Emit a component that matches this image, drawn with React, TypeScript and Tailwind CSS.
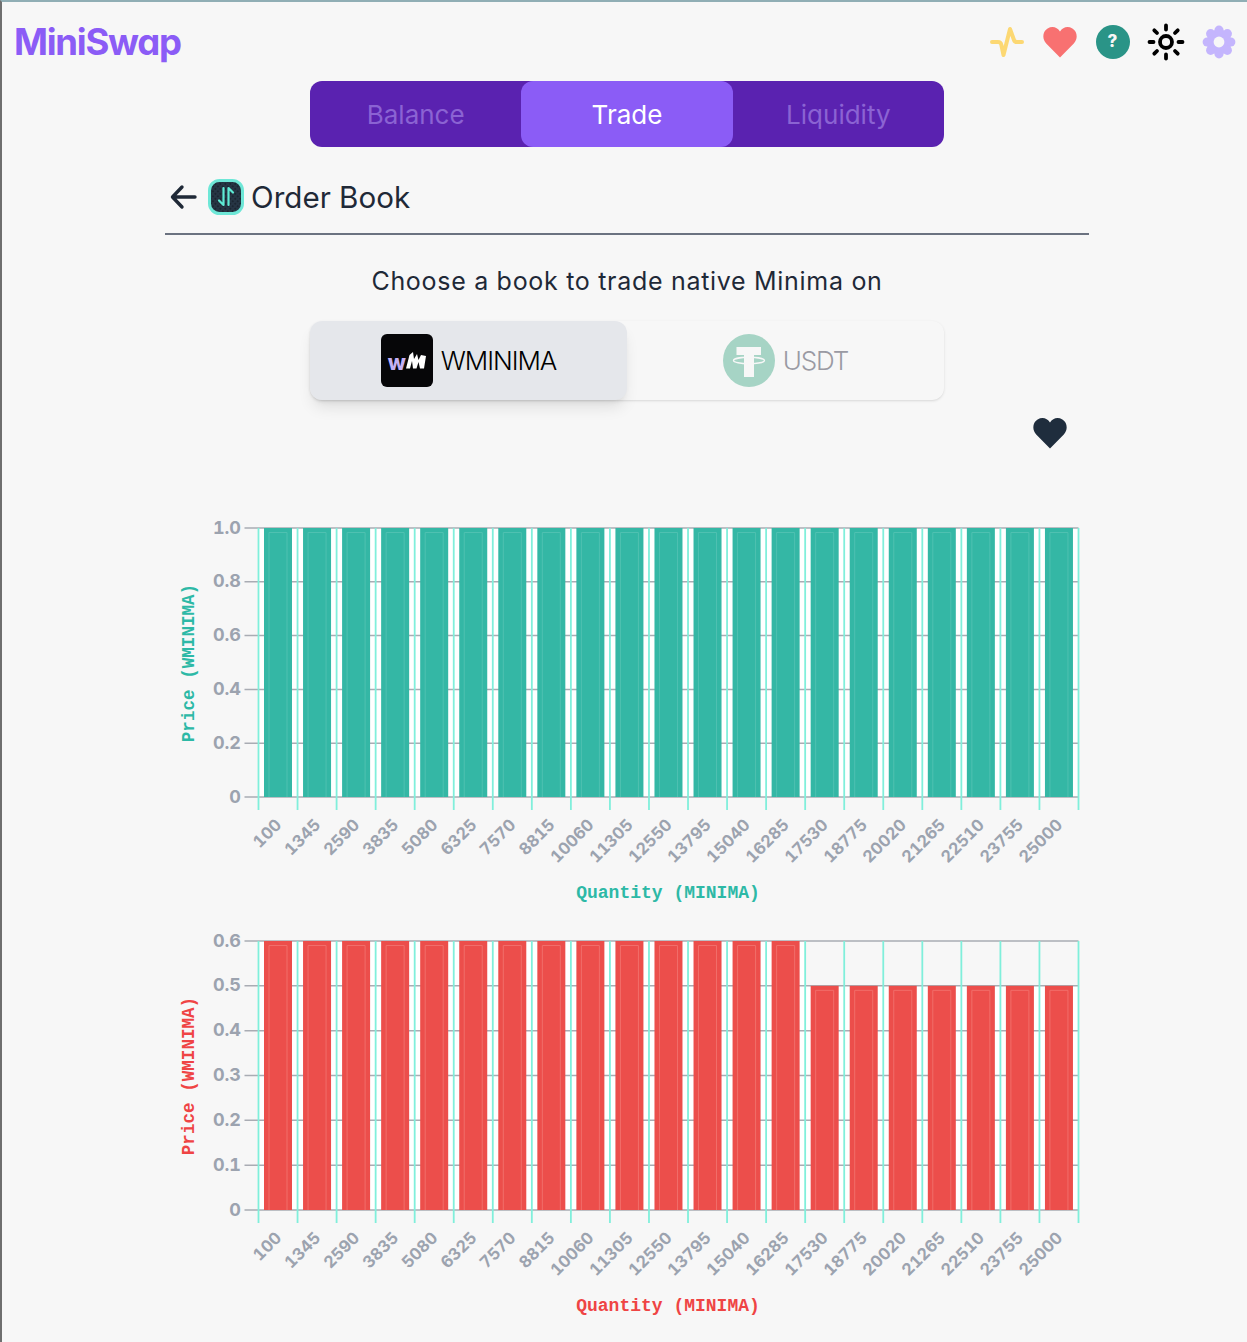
const QUANTITIES = [
  100, 1345, 2590, 3835, 5080, 6325, 7570, 8815, 10060, 11305, 12550, 13795, 15040, 16285, 17530,
  18775, 20020, 21265, 22510, 23755, 25000,
];

const PLOT_LEFT = 93.5;
const PLOT_RIGHT = 913.5;
const PLOT_TOP = 23;
const PLOT_BOTTOM = 292;
const STEP = (PLOT_RIGHT - PLOT_LEFT) / QUANTITIES.length;

type ChartProps = {
  ticks: string[];
  max: number;
  values: number[];
  barColor: string;
  innerColor: string;
  titleFill: string;
};

function BookChart({ ticks, max, values, barColor, innerColor, titleFill }: ChartProps) {
  const plotH = PLOT_BOTTOM - PLOT_TOP;
  return (
    <svg width="924" height="413" viewBox="0 0 924 413" className="block">
      {values.map((v, i) => {
        const x = PLOT_LEFT + i * STEP;
        const y = PLOT_BOTTOM - (v / max) * plotH;
        return <rect key={i} x={x} y={y} width={STEP} height={PLOT_BOTTOM - y} fill="#ffffff" />;
      })}
      {ticks.map((t, i) => {
        const y = PLOT_BOTTOM - (i / (ticks.length - 1)) * plotH;
        return (
          <g key={t}>
            <line x1={PLOT_LEFT - 14} x2={PLOT_RIGHT} y1={y} y2={y} stroke="#a9acb3" strokeWidth="1.5" />
            <text
              x={PLOT_LEFT - 17.5}
              y={y + 5.5}
              textAnchor="end"
              fontSize="18"
              fontWeight="700"
              fill="#9ca3af"
              fontFamily="Inter, sans-serif"
              className="tabular-nums"
            >
              {t}
            </text>
          </g>
        );
      })}
      {QUANTITIES.concat(0).map((_, i) => {
        const x = PLOT_LEFT + i * STEP;
        return <line key={i} x1={x} x2={x} y1={PLOT_TOP} y2={PLOT_BOTTOM + 13} stroke="#80efdb" strokeWidth="1.8" />;
      })}
      {values.map((v, i) => {
        const x = PLOT_LEFT + i * STEP + 5.5;
        const y = PLOT_BOTTOM - (v / max) * plotH;
        return (
          <g key={i}>
            <rect x={x} y={y} width={28} height={PLOT_BOTTOM - y} fill={barColor} />
            <path d={`M${x + 5} ${PLOT_BOTTOM} V${y + 4.5} H${x + 23} V${PLOT_BOTTOM}`} fill="none" stroke={innerColor} strokeWidth="1" />
          </g>
        );
      })}
      {QUANTITIES.map((q, i) => {
        const x = PLOT_LEFT + i * STEP + 24;
        return (
          <text
            key={q}
            transform={`translate(${x} 321) rotate(-45)`}
            textAnchor="end"
            fontSize="16.5"
            fontWeight="700"
            fill="#9ca3af"
            fontFamily="Inter, sans-serif"
            className="tabular-nums"
          >
            {q}
          </text>
        );
      })}
      <text
        x={503}
        y={393}
        textAnchor="middle"
        fontSize="18"
        fontWeight="700"
        fill={titleFill}
        fontFamily="'Liberation Mono', monospace"
      >
        Quantity (MINIMA)
      </text>
      <text
        transform="translate(29 158) rotate(-90)"
        textAnchor="middle"
        fontSize="17.6"
        fontWeight="700"
        fill={titleFill}
        fontFamily="'Liberation Mono', monospace"
      >
        Price (WMINIMA)
      </text>
    </svg>
  );
}

function HeartIcon({ color }: { color: string }) {
  return (
    <svg width="34" height="32" viewBox="0 0 34 32">
      <path
        d="M17 31.5 L3.2 17.5 C-1.2 12.6 -0.4 5.4 4.6 2.4 C9.4 -0.4 14.2 1.2 17 5.4 C19.8 1.2 24.6 -0.4 29.4 2.4 C34.4 5.4 35.2 12.6 30.8 17.5 Z"
        fill={color}
      />
    </svg>
  );
}

function ActivityIcon() {
  return (
    <svg width="36" height="36" viewBox="0 0 36 36" fill="none" stroke="#fcd873" strokeWidth="4" strokeLinecap="round" strokeLinejoin="round">
      <path d="M3 18 H9 C11.5 18 12 19 12.5 21.5 L14.5 31 L21 5 L25 16 C25.5 17.5 26 18 28 18 H33" />
    </svg>
  );
}

function SunIcon() {
  return (
    <svg width="38" height="38" viewBox="0 0 38 38" fill="none" stroke="#000000" strokeWidth="3.8" strokeLinecap="round">
      <circle cx="19" cy="19" r="6" />
      <path d="M19 2.5 V6.5 M19 31.5 V35.5 M2.5 19 H6.5 M31.5 19 H35.5 M7.3 7.3 L10 10 M28 28 L30.7 30.7 M7.3 30.7 L10 28 M28 10 L30.7 7.3" />
    </svg>
  );
}

function CogIcon() {
  const angles = [0, 45, 90, 135, 180, 225, 270, 315];
  return (
    <svg width="34" height="34" viewBox="0 0 34 34">
      <circle cx="17" cy="17" r="12.5" fill="#c4b5fd" />
      {angles.map((a) => (
        <circle
          key={a}
          cx={17 + 11.8 * Math.cos((a * Math.PI) / 180)}
          cy={17 + 11.8 * Math.sin((a * Math.PI) / 180)}
          r="4.6"
          fill="#c4b5fd"
        />
      ))}
      <circle cx="17" cy="17" r="5.4" fill="#f7f7f7" />
    </svg>
  );
}

function OrderBookIcon() {
  return (
    <svg width="36" height="36" viewBox="0 0 36 36">
      <defs>
        <pattern id="dots" width="3.5" height="3.5" patternUnits="userSpaceOnUse" patternTransform="rotate(45)">
          <rect width="3.5" height="3.5" fill="#263544" />
          <circle cx="1.75" cy="1.75" r="0.7" fill="#0b1118" />
        </pattern>
      </defs>
      <rect x="1.5" y="1.5" width="33" height="33" rx="10" fill="url(#dots)" stroke="#6ee7d7" strokeWidth="3" />
      <path d="M15.5 9 V26 L11 21.5 M20.5 26 V9 L25 13.5" fill="none" stroke="#5eead4" strokeWidth="2.2" strokeLinecap="round" strokeLinejoin="round" />
    </svg>
  );
}

function WminimaIcon() {
  return (
    <div className="flex h-[53px] w-[52px] items-center justify-center rounded-md bg-[#060608] pt-[3px]">
      <span className="text-[21px] leading-none font-extrabold text-[#c4b0f5]">w</span>
      <svg width="20" height="17" viewBox="0 0 20 17" className="-mt-[3px]">
        <path d="M0 16.5 L3.5 3 L7 0 L8 7 L11 2 L12.5 8 L15 3 L20 4 L18 16.5 H14 L12.5 10 L10.5 16.5 H7 L6 9 L4 16.5 Z" fill="#ffffff" />
      </svg>
    </div>
  );
}

function TetherIcon() {
  return (
    <svg width="52" height="53" viewBox="0 0 52 53">
      <ellipse cx="26" cy="26.5" rx="26" ry="26.5" fill="#a6d4c5" />
      <path d="M13.5 13 H38 V21 H31 V43 H21 V21 H13.5 Z" fill="#f7f7f7" />
      <ellipse cx="26" cy="26.5" rx="15.5" ry="3.2" fill="none" stroke="#f7f7f7" strokeWidth="1.4" />
    </svg>
  );
}

export default function App() {
  const askValues = QUANTITIES.map(() => 1);
  const bidValues = QUANTITIES.map((_, i) => (i < 14 ? 0.6 : 0.5));

  return (
    <div className="h-[1342px] overflow-hidden border-t-2 border-l-2 border-t-[#90aeb5] border-l-[#6f6f6f] bg-[#f7f7f7] font-['Inter',sans-serif]">
      <header className="flex h-[79px] items-center justify-between pr-[2px] pl-3">
        <span className="mt-[2px] text-[36.5px] leading-none font-bold tracking-[-0.035em] text-[#8b5cf6] [font-feature-settings:'cv11']">
          MiniSwap
        </span>
        <div className="flex items-center [&>*]:flex [&>*]:w-[53px] [&>*]:justify-center">
          <div>
            <ActivityIcon />
          </div>
          <div>
            <HeartIcon color="#f87171" />
          </div>
          <div>
            <span className="flex h-[34px] w-[34px] items-center justify-center rounded-full bg-[#2a9487] text-[17px] font-extrabold text-[#f7f7f7]">
              ?
            </span>
          </div>
          <div>
            <SunIcon />
          </div>
          <div>
            <CogIcon />
          </div>
        </div>
      </header>

      <div className="ml-[163px] w-[924px]">
        <nav className="mx-auto grid h-[66px] w-[634px] grid-cols-3 overflow-hidden rounded-xl bg-[#5a22b0] text-[26px]">
          <button className="text-[#8b63d3]">Balance</button>
          <button className="rounded-xl bg-[#8b5cf6] text-white">Trade</button>
          <button className="text-[#8b63d3]">Liquidity</button>
        </nav>

        <div className="flex h-[88px] items-center border-b-2 border-[#6b7280] pt-[14px] pl-[5px] text-[#1f2937]">
          <svg width="28" height="28" viewBox="0 0 28 28" fill="none" stroke="#1f2937" strokeWidth="3.4" strokeLinecap="round" strokeLinejoin="round">
            <path d="M12 4 L2.5 14 L12 24 M3 14 H25" />
          </svg>
          <span className="mr-[7px] ml-[10px]">
            <OrderBookIcon />
          </span>
          <span className="mt-[2px] text-[29.6px] leading-none">Order Book</span>
        </div>

        <p className="mt-[29px] text-center text-[25px] leading-[34px] tracking-[0.7px] text-[#1f2937]">
          Choose a book to trade native Minima on
        </p>

        <div className="mx-auto mt-[23px] grid h-[79px] w-[634px] grid-cols-2 rounded-xl shadow-sm">
          <div className="flex items-center justify-center gap-2 rounded-xl bg-[#e5e7eb] shadow-lg">
            <WminimaIcon />
            <span className="text-[26px] font-light tracking-[-0.04em] text-black">WMINIMA</span>
          </div>
          <div className="flex items-center justify-center gap-2">
            <TetherIcon />
            <span className="text-[26px] font-light tracking-[-0.04em] text-[#9a9aa3]">USDT</span>
          </div>
        </div>

        <div className="mt-[17px] flex justify-end pr-[22px]">
          <HeartIcon color="#1f2d3d" />
        </div>

        <div className="mt-[56px]">
          <BookChart
            ticks={["0", "0.2", "0.4", "0.6", "0.8", "1.0"]}
            max={1}
            values={askValues}
            barColor="#34b7a5"
            innerColor="#4fc1b1"
            titleFill="#2db9a6"
          />
          <BookChart
            ticks={["0", "0.1", "0.2", "0.3", "0.4", "0.5", "0.6"]}
            max={0.6}
            values={bidValues}
            barColor="#ec4e4b"
            innerColor="#f16e6a"
            titleFill="#ef4444"
          />
        </div>
      </div>
    </div>
  );
}
